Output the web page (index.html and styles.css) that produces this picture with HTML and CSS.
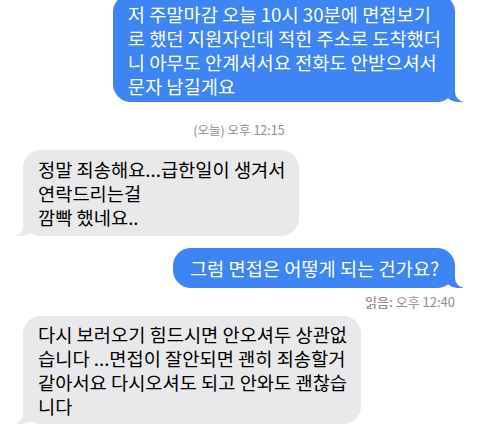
FILE: index.html
```html
<!doctype html>
<html>
<head>
<meta charset="utf-8">
<title>메시지</title>
  <link rel="stylesheet" href="styles.css">
</head>
<body>
  <div class="chat">
    <div class="bubble sent first">저 주말마감 오늘 10시 30분에 면접보기<br>로 했던 지원자인데 적힌 주소로 도착했더<br>니 아무도 안계셔서요 전화도 안받으셔서<br>문자 남길게요</div>

    <div class="stamp">(오늘) 오후 12:15</div>

    <div class="bubble recv">정말 죄송해요...급한일이 생겨서<br>연락드리는걸<br>깜빡 했네요..</div>

    <div class="bubble sent one">그럼 면접은 어떻게 되는 건가요?</div>
    <div class="receipt"><b>읽음:</b> 오후 12:40</div>

    <div class="bubble recv last">다시 보러오기 힘드시면 안오셔두 상관없<br>습니다 ...면접이 잘안되면 괜히 죄송할거<br>같아서요 다시오셔도 되고 안와도 괜찮습<br>니다</div>
  </div>
</body>
</html>
```

FILE: styles.css
```css
body {
  margin: 0;
  background: #fff;
  font-family: 'Noto Sans CJK KR', 'Noto Sans', sans-serif;
}
.chat {
  display: flex;
  flex-direction: column;
  padding: 0 25px 0 23px;
  overflow: hidden;
  height: 428px;
}

.bubble {
  position: relative;
  width: fit-content;
  padding: 6px 14px 6px 15px;
  border-radius: 18px;
  font-size: 18.7px;
  line-height: 24px;
  z-index: 0;
}
.bubble::before,
.bubble::after {
  content: "";
  position: absolute;
  bottom: 0;
  height: 20px;
  z-index: -1;
}

.sent {
  align-self: flex-end;
  background: #3d84f4;
  color: #fff;
}
.sent::before {
  right: -8px;
  width: 20px;
  background: #3d84f4;
  border-bottom-left-radius: 16px 14px;
}
.sent::after {
  right: -10px;
  width: 10px;
  background: #fff;
  border-bottom-left-radius: 10px;
}

.recv {
  align-self: flex-start;
  background: #e9e9eb;
  color: #000;
  margin-top: 12px;
  padding: 7px 14px 7px 15px;
}
.recv::before {
  left: -6px;
  width: 20px;
  background: #e9e9eb;
  border-bottom-right-radius: 16px 14px;
}
.recv::after {
  left: -10px;
  width: 10px;
  background: #fff;
  border-bottom-right-radius: 10px;
}

.first {
  margin-top: -6px;
  padding-top: 8px;
  padding-bottom: 4px;
}
.one {
  margin-top: 12px;
  padding: 8px 16px 8px 17px;
}
.last {
  margin-top: 6px;
  padding: 6px 14px 6px 15px;
}

.stamp,
.receipt {
  font-size: 12.5px;
  line-height: 16px;
  color: #8e8e93;
}
.stamp {
  align-self: center;
  margin-top: 20px;
}
.receipt {
  align-self: flex-end;
  margin-top: 6px;
  font-size: 13px;
}
.receipt b {
  font-weight: 500;
}
```
